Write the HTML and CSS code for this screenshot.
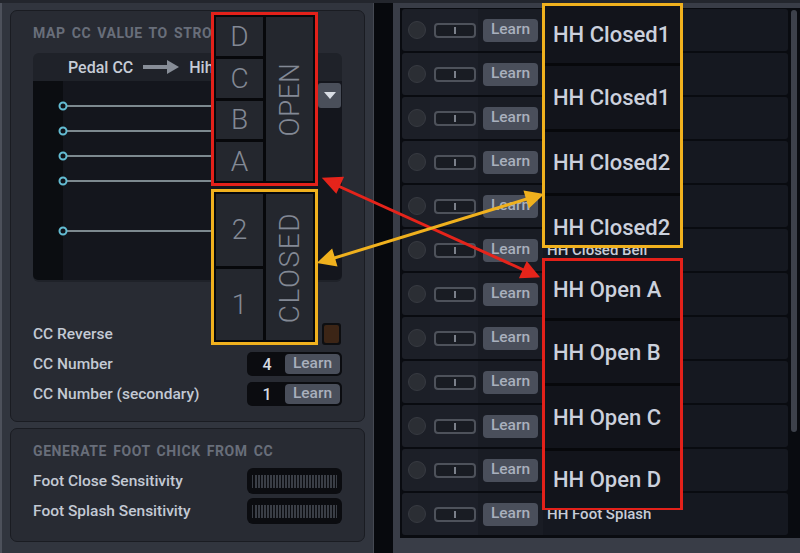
FILE: index.html
```
<!DOCTYPE html>
<html>
<head>
    <title>Hihat CC Mapping</title>
    <link rel="stylesheet" href="styles.css">
</head>
<body>
    <div class="app">
        <div class="left">
            <section class="card map-card">
                <h2 class="card-title">MAP CC VALUE TO STROKES</h2>
                <div class="curve-panel">
                    <div class="curve-head">
                        <span>Pedal CC</span>
                        <svg class="head-arrow" width="36" height="14" viewBox="0 0 36 14">
                            <rect x="0" y="5" width="26" height="4" fill="#878d97"/>
                            <polygon points="24,0 36,7 24,14" fill="#878d97"/>
                        </svg>
                        <span>Hihat Stroke</span>
                    </div>
                    <div class="curve">
                        <svg class="curve-lines" width="309" height="199" viewBox="0 0 309 199">
                            <g stroke="#7d898f" stroke-width="2">
                                <line x1="34" y1="25" x2="282" y2="25"/>
                                <line x1="34" y1="50" x2="282" y2="50"/>
                                <line x1="34" y1="75" x2="282" y2="75"/>
                                <line x1="34" y1="100" x2="282" y2="100"/>
                                <line x1="34" y1="150" x2="282" y2="150"/>
                            </g>
                            <g fill="#10131a" stroke="#63bcd3" stroke-width="2">
                                <circle cx="30" cy="25" r="3.5"/>
                                <circle cx="30" cy="50" r="3.5"/>
                                <circle cx="30" cy="75" r="3.5"/>
                                <circle cx="30" cy="100" r="3.5"/>
                                <circle cx="30" cy="150" r="3.5"/>
                            </g>
                        </svg>
                        <button class="drop"><span class="tri"></span></button>
                    </div>
                </div>
                <div class="fields">
                    <div class="field">
                        <span>CC Reverse</span>
                        <span class="check"><i></i></span>
                    </div>
                    <div class="field">
                        <span>CC Number</span>
                        <div class="num"><span class="val">4</span><button class="learn">Learn</button></div>
                    </div>
                    <div class="field">
                        <span>CC Number (secondary)</span>
                        <div class="num"><span class="val">1</span><button class="learn">Learn</button></div>
                    </div>
                </div>
            </section>
            <section class="card chick-card">
                <h2 class="card-title">GENERATE FOOT CHICK FROM CC</h2>
                <div class="fields">
                    <div class="field">
                        <span>Foot Close Sensitivity</span>
                        <div class="meter"><div class="ticks"></div></div>
                    </div>
                    <div class="field">
                        <span>Foot Splash Sensitivity</span>
                        <div class="meter"><div class="ticks"></div></div>
                    </div>
                </div>
            </section>
        </div>

        <div class="gutter"></div>

        <div class="right">
            <div class="list">
                <div class="rows">
                    <div class="row"><span class="led"></span><span class="toggle"><i></i></span><button class="learn">Learn</button><span class="name"></span></div>
                    <div class="row"><span class="led"></span><span class="toggle"><i></i></span><button class="learn">Learn</button><span class="name"></span></div>
                    <div class="row"><span class="led"></span><span class="toggle"><i></i></span><button class="learn">Learn</button><span class="name"></span></div>
                    <div class="row"><span class="led"></span><span class="toggle"><i></i></span><button class="learn">Learn</button><span class="name"></span></div>
                    <div class="row"><span class="led"></span><span class="toggle"><i></i></span><button class="learn">Learn</button><span class="name"></span></div>
                    <div class="row"><span class="led"></span><span class="toggle"><i></i></span><button class="learn">Learn</button><span class="name">HH Closed Bell</span></div>
                    <div class="row"><span class="led"></span><span class="toggle"><i></i></span><button class="learn">Learn</button><span class="name"></span></div>
                    <div class="row"><span class="led"></span><span class="toggle"><i></i></span><button class="learn">Learn</button><span class="name"></span></div>
                    <div class="row"><span class="led"></span><span class="toggle"><i></i></span><button class="learn">Learn</button><span class="name"></span></div>
                    <div class="row"><span class="led"></span><span class="toggle"><i></i></span><button class="learn">Learn</button><span class="name"></span></div>
                    <div class="row"><span class="led"></span><span class="toggle"><i></i></span><button class="learn">Learn</button><span class="name"></span></div>
                    <div class="row"><span class="led"></span><span class="toggle"><i></i></span><button class="learn">Learn</button><span class="name">HH Foot Splash</span></div>
                </div>
                <div class="scroll"><div class="thumb"></div></div>
            </div>
        </div>

        <!-- annotation overlays -->
        <div class="mark mark-red strokes-open">
            <div class="letters">
                <div class="cell">D</div>
                <div class="cell">C</div>
                <div class="cell">B</div>
                <div class="cell">A</div>
            </div>
            <div class="cell tall"><span class="vert">OPEN</span></div>
        </div>
        <div class="mark mark-yellow strokes-closed">
            <div class="letters">
                <div class="cell">2</div>
                <div class="cell">1</div>
            </div>
            <div class="cell tall"><span class="vert closed">CLOSED</span></div>
        </div>

        <div class="mark mark-yellow names-closed">
            <div class="big" style="height: 57px">HH Closed1</div>
            <div class="big" style="height: 63px">HH Closed1</div>
            <div class="big" style="height: 61px">HH Closed2</div>
            <div class="big low" style="height: 49px">HH Closed2</div>
        </div>
        <div class="mark mark-red names-open">
            <div class="big" style="height: 57px">HH Open A</div>
            <div class="big" style="height: 62px">HH Open B</div>
            <div class="big" style="height: 62px">HH Open C</div>
            <div class="big" style="height: 57px">HH Open D</div>
        </div>

        <svg class="arrows" width="800" height="553" viewBox="0 0 800 553">
            <g stroke="#e5241b" stroke-width="3" fill="#e5241b">
                <line x1="336" y1="185" x2="526" y2="271"/>
                <polygon points="325,179 335.9,191.1 341.7,178.3"/>
                <polygon points="537,276 521.3,276.7 527.1,263.9"/>
            </g>
            <g stroke="#f0b11e" stroke-width="3" fill="#f0b11e">
                <line x1="331" y1="259" x2="530" y2="198"/>
                <polygon points="320,262 335.4,264.6 331.4,251.2"/>
                <polygon points="541,195 529.6,205.8 525.6,192.4"/>
            </g>
        </svg>
    </div>
</body>
</html>
```
FILE: styles.css
```
html, body {
    margin: 0;
    padding: 0;
}

body {
    background-color: #15171c;
    font-family: Roboto, "Liberation Sans", sans-serif;
    color: #c3c9d4;
}

.app {
    position: relative;
    display: flex;
    width: 800px;
    height: 553px;
    padding-top: 3px;
    box-sizing: border-box;
    background-color: #23262d;
    overflow: hidden;
}

/* left side */

.left {
    width: 373px;
    box-sizing: border-box;
    border-left: 2px solid #4d515b;
    padding: 7px 8px 0 8px;
    background-color: #31353e;
}

.card {
    background-color: #282b33;
    border: 1px solid #1a1c22;
    border-radius: 7px;
    padding: 12px 22px 0 22px;
    box-sizing: border-box;
}

.map-card {
    height: 412px;
}

.chick-card {
    height: 114px;
    margin-top: 6px;
}

.card-title {
    margin: 0;
    height: 20px;
    line-height: 20px;
    font-size: 14px;
    font-weight: bold;
    letter-spacing: 0.6px;
    word-spacing: 2px;
    color: #686e7a;
    white-space: nowrap;
    overflow: hidden;
}

.curve-panel {
    margin-top: 10px;
    height: 229px;
    background-color: #1f2229;
    border-radius: 6px;
    display: flex;
    flex-direction: column;
}

.curve-head {
    height: 28px;
    display: flex;
    align-items: center;
    gap: 10px;
    padding-left: 35px;
    font-size: 16px;
    font-weight: 500;
    color: #c6ccd6;
    white-space: nowrap;
    overflow: hidden;
}

.curve {
    position: relative;
    flex: 1;
    margin-bottom: 2px;
    border-radius: 0 0 5px 5px;
    background: linear-gradient(to right, #0b0d11 30px, #14161d 30px);
}

.curve-lines {
    display: block;
}

.drop {
    position: absolute;
    top: 2px;
    right: 1px;
    width: 23px;
    height: 25px;
    border: none;
    border-radius: 3px;
    background-color: #4a4f5a;
    padding: 0;
    display: flex;
    align-items: center;
    justify-content: center;
}

.tri {
    width: 0;
    height: 0;
    border-left: 6px solid transparent;
    border-right: 6px solid transparent;
    border-top: 7px solid #d9dde4;
}

.map-card .fields {
    margin-top: 37px;
}

.chick-card .fields {
    margin-top: 5px;
}

.field {
    height: 30px;
    display: flex;
    align-items: center;
    justify-content: space-between;
    font-size: 15.5px;
    font-weight: 500;
    color: #c3c9d4;
    white-space: nowrap;
}

.check {
    width: 19px;
    height: 22px;
    box-sizing: border-box;
    padding: 2px;
    border-radius: 3px;
    background-color: #0d0e11;
    margin-right: 1px;
}

.check i {
    display: block;
    height: 100%;
    border-radius: 2px;
    background-color: #3c2516;
}

.num {
    width: 95px;
    height: 24px;
    box-sizing: border-box;
    padding: 2px;
    border-radius: 5px;
    background-color: #0b0c10;
    display: flex;
    align-items: center;
}

.num .val {
    width: 36px;
    text-align: center;
    font-size: 16px;
    color: #d6dbe3;
}

.learn {
    border: none;
    border-radius: 4px;
    background-color: #4a4f5b;
    color: #a9b0bd;
    font-family: inherit;
    font-size: 15.5px;
    font-weight: 500;
    padding: 0;
    line-height: 1;
}

.num .learn {
    flex: 1;
    height: 20px;
}

.meter {
    width: 95px;
    height: 26px;
    box-sizing: border-box;
    padding: 7px 5px 6px 5px;
    border-radius: 6px;
    background-color: #0b0c10;
}

.ticks {
    height: 100%;
    background: repeating-linear-gradient(to right, #3a3e46 0 1.5px, transparent 1.5px 3px);
}

/* middle gap */

.gutter {
    width: 20px;
    background-color: #07090d;
    border-left: 1px solid #454952;
    box-sizing: border-box;
}

/* right side */

.right {
    flex: 1;
    padding: 5px 0 0 7px;
    background-color: #393d47;
}

.list {
    display: flex;
    padding: 1px 0 3px 2px;
    background-color: #090b10;
}

.rows {
    width: 386px;
    display: flex;
    flex-direction: column;
    gap: 2px;
}

.row {
    height: 42px;
    display: flex;
    align-items: center;
    padding-left: 6px;
    border-radius: 3px;
    background: linear-gradient(to right, #1c1f27 0 28px, #1d2029 28px 76px, #191c24 76px 141px, #151820 141px);
}

.led {
    width: 18px;
    height: 18px;
    box-sizing: border-box;
    border-radius: 50%;
    background-color: #2b2e34;
    border: 1px solid #373a41;
}

.toggle {
    width: 42px;
    height: 15px;
    box-sizing: border-box;
    margin-left: 8px;
    border: 2px solid #4e525b;
    border-radius: 4px;
    background-color: #191c23;
    display: flex;
    align-items: center;
    justify-content: center;
}

.toggle i {
    width: 2px;
    height: 7px;
    background-color: #7b808a;
}

.row .learn {
    width: 55px;
    height: 23px;
    margin-left: 7px;
}

.name {
    margin-left: 9px;
    font-size: 15px;
    font-weight: 500;
    color: #c8cdd8;
    white-space: nowrap;
}

.scroll {
    flex: 1;
    padding: 1px 3px 0 3px;
}

.thumb {
    height: 422px;
    border-radius: 3px;
    background-color: #3d414b;
}

/* annotations */

.mark {
    position: absolute;
    box-sizing: border-box;
    border: 3px solid;
    background-color: #07080b;
    padding: 2px;
}

.mark-red {
    border-color: #e3211a;
}

.mark-yellow {
    border-color: #f0b11e;
}

.strokes-open,
.strokes-closed {
    left: 211px;
    width: 107px;
    display: flex;
    gap: 3px;
}

.strokes-open {
    top: 12px;
    height: 174px;
}

.strokes-closed {
    top: 189px;
    height: 156px;
}

.letters {
    width: 47px;
    display: flex;
    flex-direction: column;
    gap: 3px;
}

.cell {
    flex: 1;
    display: flex;
    align-items: center;
    justify-content: center;
    background-color: #24272e;
    color: #838995;
    font-size: 28px;
    font-weight: 300;
}

.cell.tall {
    width: 47px;
    flex: none;
}

.vert {
    transform: rotate(-90deg);
    font-size: 28px;
    letter-spacing: 0.5px;
    white-space: nowrap;
}

.vert.closed {
    letter-spacing: 1.6px;
}

.names-closed,
.names-open {
    left: 542px;
    width: 141px;
    padding: 0;
    display: flex;
    flex-direction: column;
    gap: 3px;
}

.names-closed {
    top: 3px;
    height: 245px;
}

.names-open {
    top: 258px;
    height: 252px;
}

.big {
    flex: none;
    display: flex;
    align-items: center;
    padding-left: 8px;
    background-color: #12141b;
    color: #cbd0dc;
    font-size: 22px;
    font-weight: 500;
    white-space: nowrap;
}

.big.low {
    align-items: flex-end;
    padding-bottom: 5px;
    box-sizing: border-box;
}

.arrows {
    position: absolute;
    left: 0;
    top: 0;
    pointer-events: none;
}
```
